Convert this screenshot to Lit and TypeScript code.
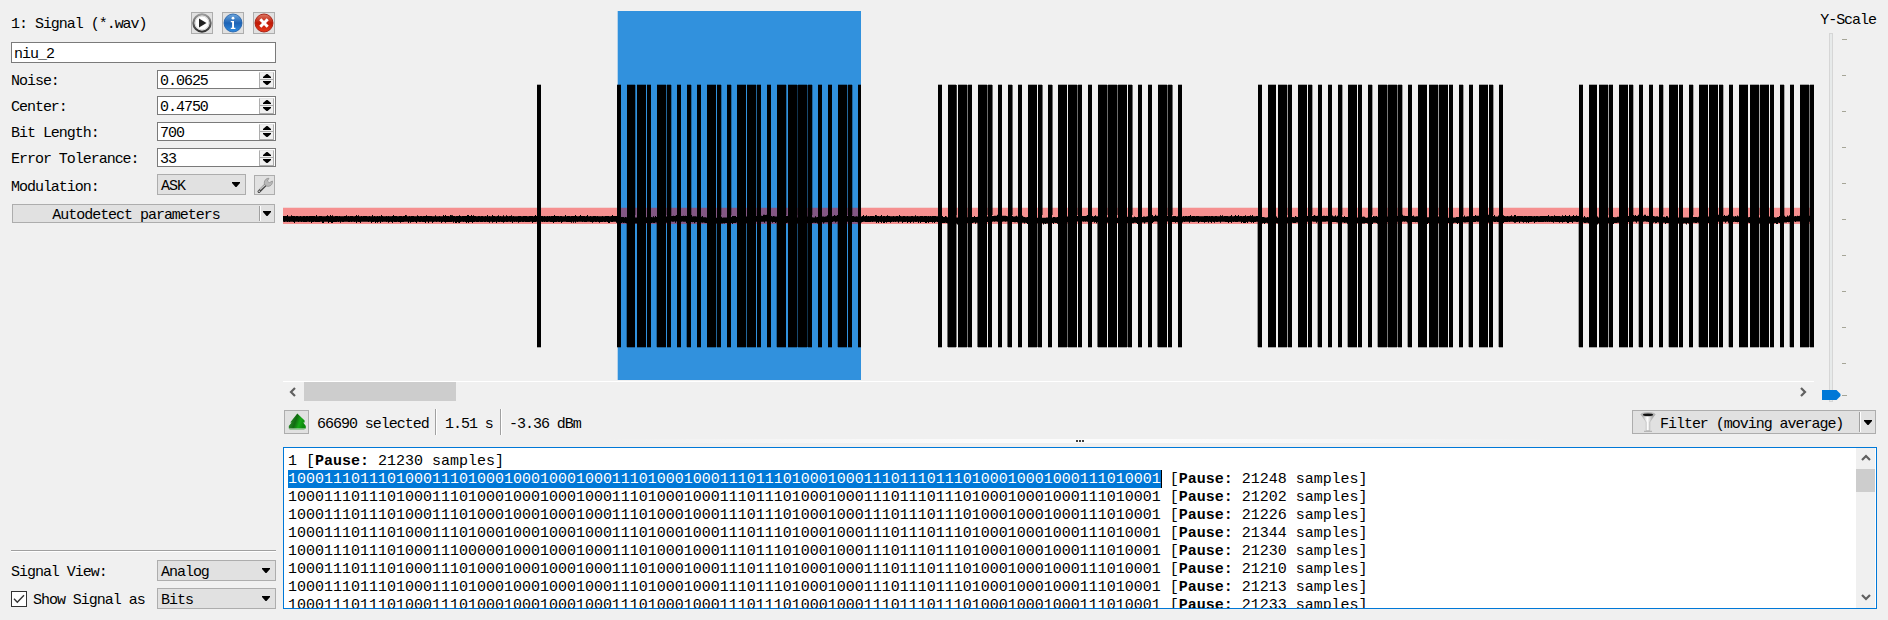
import { LitElement, html, css, svg } from "lit";
import { customElement } from "lit/decorators.js";

const PULSES = "NWWNWNNNNWNNWWNNWWWNNNWNN";
const BITS = PULSES.slice(0, 24)
  .split("")
  .map((p) => (p === "W" ? "1110" : "1000"))
  .join("") + "1";
const BITS_GLITCH = BITS.slice(0, 16) + "1110" + "0000" + BITS.slice(24);

const PAUSES = [21248, 21202, 21226, 21344, 21230, 21210, 21213, 21233];

const BURSTS: { x: number; pitch: number; gray: number[]; soft: number }[] = [
  { x: 617, pitch: 10.03, gray: [17, 18], soft: 0.3 },
  { x: 937.8, pitch: 10.01, gray: [1, 2], soft: 0.55 },
  { x: 1258, pitch: 10.03, gray: [12, 13], soft: 0.35 },
  { x: 1579, pitch: 10.03, gray: [22], soft: 0.3 },
];

const LEFT = 283;
const RIGHT = 1814;

/** Baseline noise: one thin column per pixel with a small seeded jitter. */
function noisePath(): string {
  let seed = 4711;
  const rnd = () => {
    seed = (seed * 1103515245 + 12345) & 0x7fffffff;
    return seed / 0x7fffffff;
  };
  let d = "";
  for (let x = LEFT; x < RIGHT; x++) {
    const phase = BURSTS.map((b) => x - b.x).find((v) => v >= 0 && v < 245);
    const drift = phase === undefined ? 0 : Math.sin(phase / 13) * 0.9 + 0.6;
    const top = 216 + drift - (rnd() > 0.85 ? 1 : 0) + (rnd() > 0.6 ? 0.3 : 0);
    const bottom = 222 + drift + (rnd() > 0.85 ? 1 : 0) - (rnd() > 0.6 ? 0.3 : 0);
    d += `M${x} ${top.toFixed(1)}h1V${bottom.toFixed(1)}h-1z`;
  }
  return d;
}

function pulses() {
  const out = [];
  for (const b of BURSTS) {
    for (let i = 0; i < PULSES.length; i++) {
      const x = Math.round(b.x + b.pitch * i);
      if (x >= RIGHT) break;
      const wide = PULSES[i] === "W";
      const w = i === 24 && b.x === 617 ? 3 : wide ? (i === 1 ? 8 : 9) : 4;
      out.push(svg`<rect x=${x} y="85" width=${w} height="262"/>`);
      out.push(svg`<rect x=${x} y="84" width=${w} height="264" opacity=".3"/>`);
      if ((i * 7 + Math.round(b.x)) % 3 === 0 || i % 6 === 5) {
        out.push(svg`<rect x=${x + w} y="85" width="1" height="130" opacity=${b.soft}/>`);
      }
      if ((i * 5 + Math.round(b.x)) % 3 === 1) {
        out.push(svg`<rect x=${x - 1} y="220" width="1" height="127" opacity=${b.soft}/>`);
      }
      if (b.gray.includes(i)) {
        out.push(svg`<rect x=${x + w} y="85" width="1" height="262" opacity=".5"/>`);
      }
    }
  }
  return out;
}

const caret = html`<svg class="caret" viewBox="0 0 8 5" width="8" height="5"><path d="M0 0h8v1L4.5 5h-1L0 1z"/></svg>`;

@customElement("app-root")
export class AppRoot extends LitElement {
  static styles = css`
    :host {
      display: flex;
      width: 1888px;
      height: 620px;
      box-sizing: border-box;
      background: #f0f0f0;
      color: #000;
      overflow: hidden;
      font: 15px/16px "Liberation Mono", monospace;
      letter-spacing: -1.03px;
      white-space: nowrap;
    }
    svg { display: block; flex: none; }
    .side {
      width: 265px;
      margin-left: 11px;
      display: flex;
      flex-direction: column;
      padding: 12px 0 11px;
      box-sizing: border-box;
    }
    .main { margin-left: 7px; width: 1594px; display: flex; flex-direction: column; }
    .row { display: flex; align-items: center; }
    .title { height: 22px; gap: 9px; padding-right: 1px; }
    .title span { flex: 1; padding-top: 4px; }
    .tool {
      box-sizing: border-box;
      width: 22px;
      height: 22px;
      background: #e1e1e1;
      border: 1px solid #adadad;
      display: flex;
      align-items: center;
      justify-content: center;
    }
    .field {
      box-sizing: border-box;
      border: 1px solid #7a7a7a;
      background: #fff;
      display: flex;
      align-items: center;
      padding-left: 2px;
    }
    .name { height: 21px; margin: 8px 0 7px; }
    .param { height: 19px; margin-bottom: 7px; }
    .label, .value { padding-top: 4px; box-sizing: border-box; }
    .label { width: 146px; }
    .spin { width: 119px; height: 19px; justify-content: space-between; }
    .steps {
      flex: none;
      width: 13px;
      height: 14px;
      margin-right: 1px;
      border: 1px solid #adadad;
      border-top-color: #e6e6e6;
      box-sizing: content-box;
      background: #f0f0f0;
      display: flex;
      flex-direction: column;
    }
    .step { flex: 1; display: flex; align-items: center; justify-content: center; }
    .step + .step { border-top: 1px solid #adadad; }
    .combo {
      box-sizing: border-box;
      height: 21px;
      width: 119px;
      background: #e1e1e1;
      border: 1px solid #adadad;
      display: flex;
      align-items: center;
      justify-content: space-between;
      padding: 0 5px 0 3px;
    }
    .combo .caret { margin-top: -1px; }
    .mod { height: 21px; }
    .mod .label { padding-top: 6px; }
    .mod .combo { width: 89px; }
    .mod .tool { width: 21px; height: 20px; margin: 1px 0 0 8px; }
    .split {
      box-sizing: border-box;
      background: #e1e1e1;
      border: 1px solid #adadad;
      display: flex;
      align-items: center;
    }
    .split .text { flex: 1; }
    .split .drop {
      align-self: stretch;
      width: 15px;
      margin: 1px 0;
      border-left: 1px solid #a0a0a0;
      box-shadow: inset 1px 0 #fff;
      display: flex;
      align-items: center;
      justify-content: center;
      box-sizing: border-box;
    }
    .auto { height: 19px; margin: 9px 1px 0; }
    .auto .text { text-align: center; padding-top: 4px; }
    .grow { flex: 1; }
    .rule { height: 1px; background: #a0a0a0; border-bottom: 1px solid #fff; margin-bottom: 8px; }
    .view { height: 21px; }
    .view + .view { margin-top: 7px; }
    .check {
      box-sizing: border-box;
      width: 16px;
      height: 16px;
      background: #fff;
      border: 1px solid #333;
      display: flex;
      align-items: center;
      justify-content: center;
    }
    .view .checked { width: 124px; margin-left: 6px; }

    .top { display: flex; height: 402px; }
    .plot { width: 1531px; display: flex; flex-direction: column; }
    .hscroll {
      height: 21px;
      border-top: 1px solid #fff;
      display: flex;
      box-sizing: border-box;
      justify-content: space-between;
    }
    .hscroll .arrow { width: 21px; display: flex; align-items: center; justify-content: center; box-sizing: border-box; padding: 0 2px 1px 0; }
    .hthumb { width: 152px; height: 19px; background: #cdcdcd; margin-right: auto; }
    .scale { flex: 1; display: flex; flex-direction: column; align-items: flex-end; }
    .scale .cap { box-sizing: border-box; padding: 13px 1px 0 0; height: 33px; }

    .tools { height: 26px; margin-top: 7px; }
    .tools .tool { width: 25px; height: 24px; margin-left: 1px; }
    .tools .txt { padding-top: 6px; }
    .sel { width: 118px; margin-left: 8px; }
    .dur { width: 55px; margin-left: 8px; }
    .pow { margin-left: 7px; flex: 1; }
    .vline { width: 1px; height: 26px; background: #a0a0a0; border-right: 1px solid #fff; }
    .filter { width: 244px; height: 24px; margin-right: 1px; padding-left: 7px; }
    .filter .text { padding: 5px 0 0 4px; }
    .filter .drop { width: 16px; }
    .handle {
      height: 4px;
      margin: 4px 0;
      background: linear-gradient(90deg, #f0f0f0 20%, #fcfcfc 45%, #fcfcfc 55%, #f0f0f0 80%);
      display: flex;
      align-items: center;
      justify-content: center;
      gap: 1px;
    }
    .dot { width: 2px; height: 2px; background: #404040; }

    .bits {
      box-sizing: border-box;
      height: 162px;
      border: 1px solid #0078d7;
      background: #fff;
      display: flex;
      overflow: hidden;
      letter-spacing: -0.005px;
      line-height: 20px;
    }
    .lines { flex: 1; padding: 4px 0 0 4px; overflow: hidden; }
    .line { height: 18px; white-space: pre; }
    .hot { background: #0078d7; color: #fff; display: inline-block; height: 18px; box-shadow: 1px 0 #000; }
    .vscroll { width: 19px; margin-right: 1px; background: #f0f0f0; display: flex; flex-direction: column; align-items: center; }
    .vthumb { width: 19px; height: 23px; background: #cdcdcd; margin: 7px 0 auto; }
    .vscroll .up { margin-top: 6px; }
    .vscroll .down { margin-bottom: 7px; }
  `;

  private spin(label: string, value: string) {
    return html`<div class="row param">
      <span class="label">${label}</span>
      <div class="field spin">
        <span class="value">${value}</span>
        <div class="steps">
          <div class="step"><svg width="8" height="4" viewBox="0 0 8 4"><path d="M0 4V3L3.5 0h1L8 3v1z"/></svg></div>
          <div class="step"><svg width="8" height="4" viewBox="0 0 8 4"><path d="M0 0h8v1L4.5 4h-1L0 1z"/></svg></div>
        </div>
      </div>
    </div>`;
  }

  private combo(value: string) {
    return html`<div class="combo"><span class="value">${value}</span>${caret}</div>`;
  }

  private pause(n: number) {
    return html` [<b>Pause:</b> ${n} samples]`;
  }

  private chevron(d: string, w: number, h: number, cls = "") {
    return html`<svg class=${cls} width=${w} height=${h} viewBox="0 0 ${w} ${h}" fill="none" stroke="#606060" stroke-width="2.2"><path d=${d}/></svg>`;
  }

  render() {
    return html`
      <div class="side">
        <div class="row title">
          <span>1: Signal (*.wav)</span>
          <div class="tool"><svg width="20" height="20" viewBox="0 0 20 20">
            <defs><linearGradient id="p" x2="0" y2="1"><stop stop-color="#999"/><stop offset="1" stop-color="#333"/></linearGradient></defs>
            <circle cx="10" cy="10" r="8.6" fill="#fff" stroke="url(#p)" stroke-width="2.2"/><circle cx="10" cy="10" r="6.9" fill="none" stroke="#ccc" stroke-width=".8"/><path d="M7 5.5v9l7.5-4.5z" fill="#222"/></svg></div>
          <div class="tool"><svg width="20" height="20" viewBox="0 0 20 20">
            <defs><linearGradient id="i" x2="0" y2="1"><stop stop-color="#6fa8de"/><stop offset=".5" stop-color="#1d63b5"/><stop offset="1" stop-color="#2f8be0"/></linearGradient></defs>
            <circle cx="10" cy="10" r="9" fill="url(#i)" stroke="#1c5ba6" stroke-width=".8"/><circle cx="10" cy="5.2" r="1.4" fill="#fff"/><path d="M7.8 8h3.2v6.8h1.4V16H7.8v-1.2h1.3V9.2H7.8z" fill="#fff"/></svg></div>
          <div class="tool"><svg width="20" height="20" viewBox="0 0 20 20">
            <defs><linearGradient id="r" x2="0" y2="1"><stop stop-color="#dd7a65"/><stop offset=".5" stop-color="#c01805"/><stop offset="1" stop-color="#e83a1c"/></linearGradient></defs>
            <circle cx="10" cy="10" r="9" fill="url(#r)" stroke="#a81a0c" stroke-width=".9"/><path d="M6.3 6.3l7.4 7.4M13.7 6.3l-7.4 7.4" stroke="#fff" stroke-width="3"/></svg></div>
        </div>
        <div class="field name"><span class="value">niu_2</span></div>
        ${this.spin("Noise:", "0.0625")} ${this.spin("Center:", "0.4750")}
        ${this.spin("Bit Length:", "700")} ${this.spin("Error Tolerance:", "33")}
        <div class="row mod">
          <span class="label">Modulation:</span>
          ${this.combo("ASK")}
          <div class="tool"><svg width="18" height="18" viewBox="0 0 18 18">
            <path d="M3 15.5l7-7" stroke="#444" stroke-width="3" stroke-linecap="round"/>
            <path d="M4 13.4l6.5-5.9" stroke="#ccc" stroke-width="1.4"/>
            <path d="M8.5 8.5C7.5 5 10 2 13 2.3L11.4 5l1.8 1.7L16.4 5c.6 3.4-2.4 6-5.6 5.2z" fill="#b9b9b9" stroke="#808080" stroke-width=".6"/>
            <circle cx="3.2" cy="15.2" r=".8" fill="#ddd"/></svg></div>
        </div>
        <div class="split auto"><span class="text">Autodetect parameters</span><div class="drop">${caret}</div></div>
        <div class="grow"></div>
        <div class="rule"></div>
        <div class="row view"><span class="label">Signal View:</span>${this.combo("Analog")}</div>
        <div class="row view">
          <div class="check"><svg width="12" height="10" viewBox="0 0 12 10" fill="none" stroke="#333" stroke-width="1.4"><path d="M1 4.8L4.3 8.2 11 1.2"/></svg></div>
          <span class="label checked">Show Signal as</span>
          ${this.combo("Bits")}
        </div>
      </div>

      <div class="main">
        <div class="top">
          <div class="plot">
            <svg width="1531" height="381" viewBox="283 0 1531 381" shape-rendering="crispEdges">
              <rect x="618" y="11" width="243" height="369" fill="#3191dd"/>
              <rect x="617" y="11" width="1" height="369" fill="#3191dd" opacity=".3"/>
              <rect x="283" y="208" width="1531" height="16" fill="#f00" opacity=".4"/>
              <rect x="283" y="207" width="1531" height="1" fill="#f00" opacity=".1"/>
              <rect x="537" y="85" width="4" height="262"/>
              <rect x="537" y="84" width="4" height="264" opacity=".3"/>
              ${pulses()}
              <path d=${noisePath()} shape-rendering="auto"/>
            </svg>
            <div class="hscroll">
              <div class="arrow">${this.chevron("M6 1L2 5l4 4", 8, 10)}</div>
              <div class="hthumb"></div>
              <div class="arrow">${this.chevron("M2 1l4 4-4 4", 8, 10)}</div>
            </div>
          </div>
          <div class="scale">
            <span class="cap">Y-Scale</span>
            <svg width="63" height="369" viewBox="1814 33 63 369" shape-rendering="crispEdges">
              <rect x="1829.5" y="33.5" width="3" height="368" fill="#e7eaea" stroke="#d6d6d6"/>
              ${[39, 75, 111, 147, 183, 219, 255, 291, 327, 363, 395].map(
                (y) => svg`<rect x="1842" y=${y} width=${y === 39 || y === 395 ? 5 : 4} height="1" fill="#a5a597"/>`
              )}
              <path d="M1822 390h14.5l4 4v2l-4 4h-14.5z" fill="#0078d7" shape-rendering="auto"/>
            </svg>
          </div>
        </div>

        <div class="row tools">
          <div class="tool"><svg width="18" height="18" viewBox="0 0 18 18">
            <defs><linearGradient id="g" x2="1" y2=".3"><stop stop-color="#3c9a3c"/><stop offset=".5" stop-color="#116b11"/><stop offset=".75" stop-color="#18a818"/><stop offset="1" stop-color="#0b8a0b"/></linearGradient></defs>
            <path d="M9.3 .5L16.6 7.5v2h-1.4l2.6 3.5v2.5H.8V13L3.6 9.5H2.2z" fill="url(#g)"/><path d="M1.5 16.5h15" stroke="#9cc79c"/></svg></div>
          <span class="txt sel">66690 selected</span><div class="vline"></div>
          <span class="txt dur">1.51 s</span><div class="vline"></div>
          <span class="txt pow">-3.36 dBm</span>
          <div class="split filter">
            <svg width="16" height="20" viewBox="0 0 16 20">
              <defs><linearGradient id="f"><stop stop-color="#999"/><stop offset=".45" stop-color="#fff"/><stop offset="1" stop-color="#888"/></linearGradient></defs>
              <path d="M1 2.5L6.2 10v8.5h3.6V10L15 2.5z" fill="url(#f)" stroke="#aaa" stroke-width=".5"/>
              <ellipse cx="8" cy="2.4" rx="7" ry="1.9" fill="#bbb" stroke="#aaa" stroke-width=".6"/><ellipse cx="8" cy="2.8" rx="5.2" ry="1.3" fill="#111"/><path d="M4 19.3h8" stroke="#aaa"/></svg>
            <span class="text">Filter (moving average)</span><div class="drop">${caret}</div>
          </div>
        </div>
        <div class="handle"><div class="dot"></div><div class="dot"></div><div class="dot"></div></div>

        <div class="bits">
          <div class="lines">
            <div class="line">1${this.pause(21230)}</div>
            ${PAUSES.map(
              (p, i) => html`<div class="line"><span class=${i === 0 ? "hot" : ""}>${i === 4 ? BITS_GLITCH : BITS}</span>${this.pause(p)}</div>`
            )}
          </div>
          <div class="vscroll">
            ${this.chevron("M1 6l4-4 4 4", 10, 8, "up")}
            <div class="vthumb"></div>
            ${this.chevron("M1 2l4 4 4-4", 10, 8, "down")}
          </div>
        </div>
      </div>
    `;
  }
}
